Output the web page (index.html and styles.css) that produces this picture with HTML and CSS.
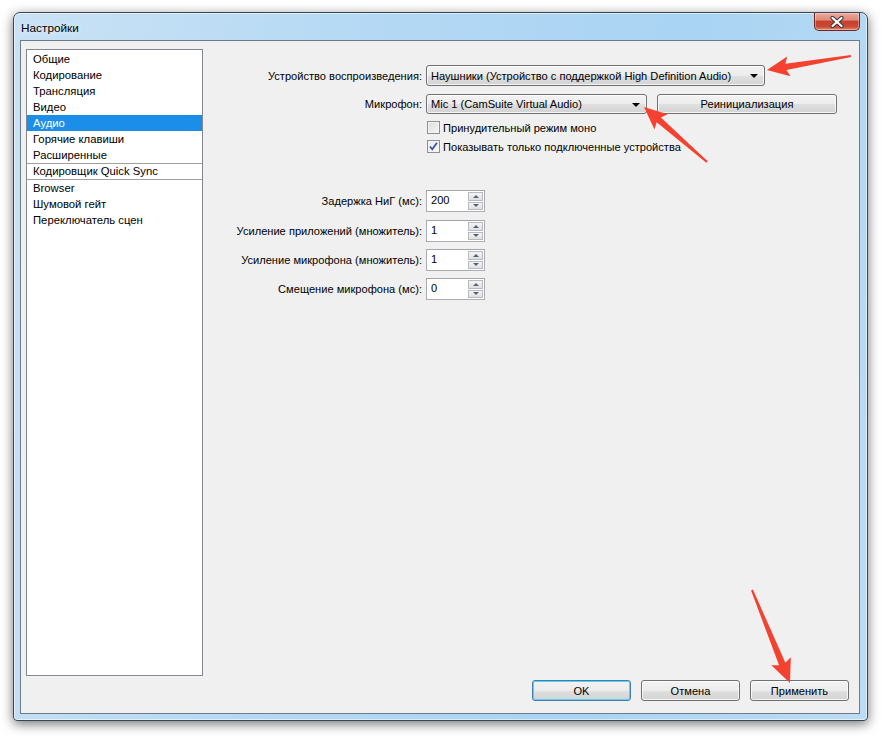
FILE: index.html
```html
<!DOCTYPE html>
<html lang="ru">
<head>
<meta charset="utf-8">
<title>Настройки</title>
<link rel="stylesheet" href="styles.css">
</head>
<body>
<div class="window">
  <div class="titlebar">
    <span class="title">Настройки</span>
    <div class="close">
      <svg width="16" height="12" viewBox="0 0 16 12">
        <path d="M3.5 2 L12.5 10 M12.5 2 L3.5 10" stroke="#3a3a3a" stroke-width="4.2" stroke-linecap="round"/>
        <path d="M3.5 2 L12.5 10 M12.5 2 L3.5 10" stroke="#ffffff" stroke-width="2.2" stroke-linecap="round"/>
      </svg>
    </div>
  </div>
  <div class="client">
    <div class="main">
      <ul class="nav">
        <li>Общие</li>
        <li>Кодирование</li>
        <li>Трансляция</li>
        <li>Видео</li>
        <li class="active">Аудио</li>
        <li>Горячие клавиши</li>
        <li>Расширенные</li>
        <li class="sep">Кодировщик Quick Sync</li>
        <li>Browser</li>
        <li>Шумовой гейт</li>
        <li>Переключатель сцен</li>
      </ul>
      <div class="panel">
        <div class="row r1">
          <span class="label">Устройство воспроизведения:</span>
          <div class="combo combo-wide"><span>Наушники (Устройство с поддержкой High Definition Audio)</span><i class="drop"></i></div>
        </div>
        <div class="row r2">
          <span class="label">Микрофон:</span>
          <div class="inline">
            <div class="combo combo-mic"><span>Mic 1 (CamSuite Virtual Audio)</span><i class="drop"></i></div>
            <div class="btn btn-reinit">Реинициализация</div>
          </div>
        </div>
        <div class="row r3">
          <span></span>
          <div class="check"><span class="box"></span><span>Принудительный режим моно</span></div>
        </div>
        <div class="row r4">
          <span></span>
          <div class="check"><span class="box checked"><svg width="11" height="11" viewBox="0 0 11 11"><path d="M2 5.5 L4.3 8.3 L9 1.8" fill="none" stroke="#3b55b0" stroke-width="1.8"/></svg></span><span>Показывать только подключенные устройства</span></div>
        </div>
        <div class="row spin-row s1">
          <span class="label">Задержка НиГ (мс):</span>
          <div class="spin"><span class="val">200</span><span class="arrows"><i class="up"></i><i class="down"></i></span></div>
        </div>
        <div class="row spin-row s2">
          <span class="label">Усиление приложений (множитель):</span>
          <div class="spin"><span class="val">1</span><span class="arrows"><i class="up"></i><i class="down"></i></span></div>
        </div>
        <div class="row spin-row s3">
          <span class="label">Усиление микрофона (множитель):</span>
          <div class="spin"><span class="val">1</span><span class="arrows"><i class="up"></i><i class="down"></i></span></div>
        </div>
        <div class="row spin-row s4">
          <span class="label">Смещение микрофона (мс):</span>
          <div class="spin"><span class="val">0</span><span class="arrows"><i class="up"></i><i class="down"></i></span></div>
        </div>
      </div>
    </div>
    <div class="buttons">
      <div class="btn btn-default">OK</div>
      <div class="btn">Отмена</div>
      <div class="btn">Применить</div>
    </div>
  </div>
</div>
<svg class="annot" width="886" height="740" viewBox="0 0 886 740">
  <g fill="#f5412f">
    <g transform="translate(851 56) rotate(170.54)">
      <polygon points="0,-1 66,-3.2 63,-10 85.2,0 63,10 66,3.2 0,1"/>
    </g>
    <g transform="translate(707 162) rotate(-138.9)">
      <polygon points="0,-1 64,-3.2 61,-10 83.6,0 61,10 64,3.2 0,1"/>
    </g>
    <g transform="translate(752 590) rotate(67.8)">
      <polygon points="0,-1 80,-3.4 77,-10.5 100.5,0 77,10.5 80,3.4 0,1"/>
    </g>
  </g>
</svg>
</body>
</html>
```

FILE: styles.css
```css
* { box-sizing: border-box; }
html, body { margin: 0; padding: 0; }
body {
  width: 886px;
  height: 740px;
  background: #ffffff;
  font-family: "Liberation Sans", Arial, sans-serif;
  font-size: 11.1px;
  color: #000;
  position: relative;
  overflow: hidden;
}
.window {
  margin: 12px 0 0 13px;
  width: 855px;
  height: 709px;
  border: 1px solid #3c4650;
  border-radius: 7px 7px 4px 4px;
  background: linear-gradient(100deg, #c9e2f5 0%, #b3d8f4 40%, #a9d4f3 70%, #bcdcf3 100%);
  box-shadow: 0 3px 12px rgba(0,0,0,0.55), inset 0 0 0 1px rgba(255,255,255,0.55);
  padding: 0 7px 6px 6px;
  display: flex;
  flex-direction: column;
}
.titlebar {
  height: 27px;
  display: flex;
  justify-content: space-between;
  align-items: flex-start;
}
.title {
  padding: 8px 0 0 1px;
  font-size: 11.8px;
  color: #000;
  text-shadow: 0 0 6px rgba(255,255,255,0.9);
}
.close {
  width: 46px;
  height: 18px;
  border: 1px solid #6a2a22;
  border-top: none;
  border-radius: 0 0 5px 5px;
  background: linear-gradient(#eba89b 0%, #e08a7a 40%, #c7402c 50%, #c94a36 80%, #e38a70 100%);
  box-shadow: inset 0 0 0 1px rgba(255,255,255,0.35);
  display: flex;
  align-items: center;
  justify-content: center;
}
.client {
  flex: 1;
  background: #f0f0f0;
  border: 1px solid #6f7b88;
  display: flex;
  flex-direction: column;
}
.main {
  flex: 1;
  display: flex;
  padding: 8px 0 0 5px;
}
.nav {
  list-style: none;
  margin: 0;
  padding: 1px 0 0 0;
  width: 177px;
  height: 627px;
  border: 1px solid #828790;
  background: #ffffff;
  font-size: 11.3px;
}
.nav li {
  height: 16px;
  line-height: 16px;
  padding-left: 6px;
  white-space: nowrap;
}
.nav li.active {
  background: #1a8ee8;
  color: #ffffff;
}
.nav li.sep {
  height: 17px;
  line-height: 15px;
  border-top: 1px solid #a0a0a0;
  border-bottom: 1px solid #a0a0a0;
}
.panel {
  display: flex;
  flex-direction: column;
}
.row {
  display: grid;
  grid-template-columns: 219px auto;
  column-gap: 4px;
  align-items: center;
}
.label {
  text-align: right;
  white-space: nowrap;
}
.r1 { margin-top: 16px; height: 21px; }
.r2 { margin-top: 8px; height: 20px; }
.r3 { margin-top: 7px; height: 13px; }
.r4 { margin-top: 6px; height: 13px; }
.s1 { margin-top: 37px; }
.s2 { margin-top: 8px; }
.s3 { margin-top: 7px; }
.s4 { margin-top: 7px; }
.spin-row { height: 22px; }

.combo, .btn {
  border: 1px solid #707070;
  border-radius: 3px;
  background: linear-gradient(#f3f3f3 0%, #ececec 50%, #e0e0e0 51%, #d3d3d3 100%);
  box-shadow: inset 0 0 0 1px rgba(255,255,255,0.75);
}
.combo {
  height: 21px;
  display: flex;
  align-items: center;
  justify-content: space-between;
  padding: 0 6px 0 4px;
  white-space: nowrap;
}
.combo-wide { width: 339px; }
.combo-mic { width: 221px; height: 20px; }
.drop {
  width: 0;
  height: 0;
  border-left: 4px solid transparent;
  border-right: 4px solid transparent;
  border-top: 4px solid #000;
  margin-top: 1px;
}
.inline {
  display: flex;
  gap: 10px;
  align-items: center;
}
.btn {
  display: flex;
  align-items: center;
  justify-content: center;
  height: 21px;
  width: 99px;
}
.btn-reinit { width: 180px; height: 20px; }
.check {
  display: flex;
  align-items: center;
  gap: 3px;
  margin-left: 1px;
  white-space: nowrap;
}
.box {
  width: 13px;
  height: 13px;
  border: 1px solid #8e8f8f;
  background: linear-gradient(135deg, #dcdcdc, #f6f6f6);
  box-shadow: inset 0 0 0 1px #f4f4f4;
  display: flex;
  align-items: center;
  justify-content: center;
}
.box.checked { background: linear-gradient(135deg, #e8e8e8, #fafafa); }
.spin {
  width: 59px;
  height: 22px;
  border: 1px solid #abadb3;
  border-top-color: #a3a5aa;
  background: #ffffff;
  display: flex;
  justify-content: space-between;
  align-items: stretch;
}
.val { padding: 3px 0 0 4px; }
.arrows {
  width: 16px;
  display: flex;
  flex-direction: column;
  gap: 1px;
  padding: 1px 1px 1px 0;
}
.arrows i {
  flex: 1;
  border: 1px solid #b8babd;
  background: linear-gradient(#f5f5f5, #e0e0e0);
  display: flex;
  align-items: center;
  justify-content: center;
}
.arrows i::after {
  content: "";
  width: 0;
  height: 0;
  border-left: 3.5px solid transparent;
  border-right: 3.5px solid transparent;
}
.arrows .up::after { border-bottom: 3px solid #50617f; }
.arrows .down::after { border-top: 3px solid #50617f; }
.buttons {
  display: flex;
  justify-content: flex-end;
  gap: 10px;
  padding: 0 10px 12px 0;
}
.btn-default {
  border-color: #3c7fb1;
  box-shadow: inset 0 0 0 1px #62cdf5;
}
.annot {
  position: absolute;
  left: 0;
  top: 0;
  pointer-events: none;
}
```
